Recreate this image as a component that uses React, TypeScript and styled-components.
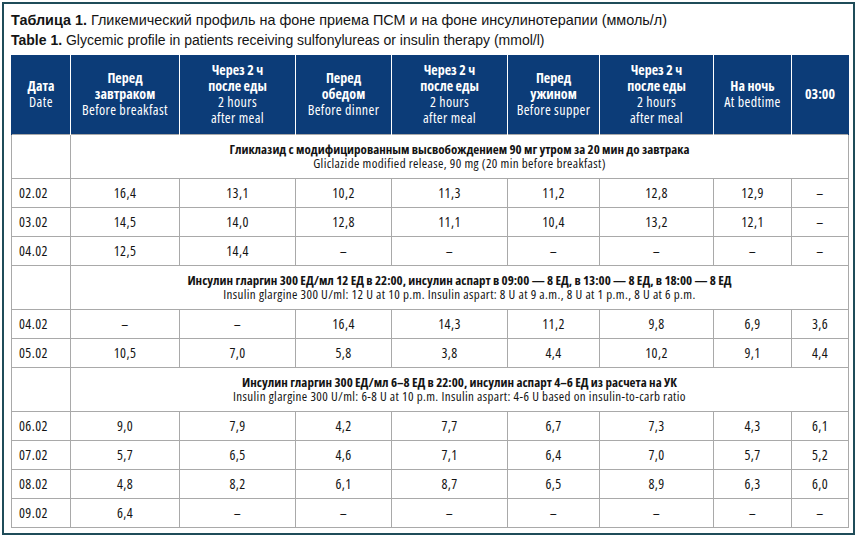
import React from "react";
import styled, { createGlobalStyle } from "styled-components";

const GlobalStyle = createGlobalStyle`
  html, body { margin: 0; padding: 0; background: #ffffff; }
  body { font-family: "Liberation Sans", Arial, sans-serif; color: #111; }
`;

const COND = `"Open Sans", "Noto Sans", sans-serif`;

const Frame = styled.div`
  box-sizing: border-box;
  margin: 2px 0 0 2px;
  width: 853px;
  height: 533px;
  border: 2px solid #1f4c59;
  padding: 6px 0 0 7px;
  background: #fff;
`;

const Title = styled.div<{ $ru?: boolean }>`
  font-family: "Liberation Sans", Arial, sans-serif;
  font-size: ${(p) => (p.$ru ? 14.4 : 14)}px;
  line-height: 20px;
  color: #141414;
  white-space: nowrap;
`;

const Strong = styled.b`
  font-weight: 700;
`;

const Table = styled.table`
  margin-top: 5px;
  border-collapse: collapse;
  table-layout: fixed;
  width: 837px;
  font-family: ${COND};
  font-stretch: condensed;
  color: #141414;
`;

const HeadCell = styled.th`
  background: #0c3c78;
  color: #fff;
  height: 79px;
  padding: 0 2px;
  box-sizing: border-box;
  border-left: 1px solid #fff;
  border-right: 1px solid #fff;
  font-size: 14px;
  line-height: 16px;
  text-align: center;
  vertical-align: middle;
  font-weight: 400;
  &:first-child { border-left: 1px solid #0c3c78; }
  &:last-child { border-right: 1px solid #0c3c78; }
`;

const HeadLine = styled.div<{ $bold?: boolean }>`
  font-weight: ${(p) => (p.$bold ? 700 : 400)};
  letter-spacing: ${(p) => (p.$bold ? "0" : "0.4px")};
  white-space: nowrap;
`;

const Cell = styled.td<{ $date?: boolean; $section?: boolean }>`
  border: 1px solid #a9a9a9;
  height: ${(p) => (p.$section ? 44 : 29)}px;
  box-sizing: border-box;
  padding: ${(p) => (p.$date ? "0 0 0 7px" : "0")};
  text-align: ${(p) => (p.$date ? "left" : "center")};
  vertical-align: middle;
  font-size: 14px;
  line-height: 16px;
  letter-spacing: 0.4px;
  white-space: nowrap;
`;

const SectionLine = styled.div<{ $bold?: boolean }>`
  font-size: 13px;
  line-height: 14px;
  font-weight: ${(p) => (p.$bold ? 700 : 400)};
  letter-spacing: ${(p) => (p.$bold ? "0" : "0.38px")};
`;

type HL = { t: string; b?: boolean };
const AFTER: HL[] = [
  { t: "Через 2 ч", b: true },
  { t: "после еды", b: true },
  { t: "2 hours" },
  { t: "after meal" },
];
const headers: HL[][] = [
  [{ t: "Дата", b: true }, { t: "Date" }],
  [{ t: "Перед", b: true }, { t: "завтраком", b: true }, { t: "Before breakfast" }],
  AFTER,
  [{ t: "Перед", b: true }, { t: "обедом", b: true }, { t: "Before dinner" }],
  AFTER,
  [{ t: "Перед", b: true }, { t: "ужином", b: true }, { t: "Before supper" }],
  AFTER,
  [{ t: "На ночь", b: true }, { t: "At bedtime" }],
  [{ t: "03:00", b: true }],
];

const widths = [59, 109, 116, 96, 116, 92, 114, 78, 57];

type Block = { ru: string; en: string; rows: string[][] };
const D = "–";
const blocks: Block[] = [
  {
    ru: "Гликлазид с модифицированным высвобождением 90 мг утром за 20 мин до завтрака",
    en: "Gliclazide modified release, 90 mg (20 min before breakfast)",
    rows: [
      ["02.02", "16,4", "13,1", "10,2", "11,3", "11,2", "12,8", "12,9", D],
      ["03.02", "14,5", "14,0", "12,8", "11,1", "10,4", "13,2", "12,1", D],
      ["04.02", "12,5", "14,4", D, D, D, D, D, D],
    ],
  },
  {
    ru: "Инсулин гларгин 300 ЕД/мл 12 ЕД в 22:00, инсулин аспарт в 09:00 — 8 ЕД, в 13:00 — 8 ЕД, в 18:00 — 8 ЕД",
    en: "Insulin glargine 300 U/ml: 12 U at 10 p.m. Insulin aspart: 8 U at 9 a.m., 8 U at 1 p.m., 8 U at 6 p.m.",
    rows: [
      ["04.02", D, D, "16,4", "14,3", "11,2", "9,8", "6,9", "3,6"],
      ["05.02", "10,5", "7,0", "5,8", "3,8", "4,4", "10,2", "9,1", "4,4"],
    ],
  },
  {
    ru: "Инсулин гларгин 300 ЕД/мл 6–8 ЕД в 22:00, инсулин аспарт 4–6 ЕД из расчета на УК",
    en: "Insulin glargine 300 U/ml: 6-8 U at 10 p.m. Insulin aspart: 4-6 U based on insulin-to-carb ratio",
    rows: [
      ["06.02", "9,0", "7,9", "4,2", "7,7", "6,7", "7,3", "4,3", "6,1"],
      ["07.02", "5,7", "6,5", "4,6", "7,1", "6,4", "7,0", "5,7", "5,2"],
      ["08.02", "4,8", "8,2", "6,1", "8,7", "6,5", "8,9", "6,3", "6,0"],
      ["09.02", "6,4", D, D, D, D, D, D, D],
    ],
  },
];

export default function App() {
  return (
    <>
      <GlobalStyle />
      <Frame>
        <Title $ru>
          <Strong>Таблица 1.</Strong> Гликемический профиль на фоне приема ПСМ и на фоне инсулинотерапии (ммоль/л)
        </Title>
        <Title>
          <Strong>Table 1.</Strong> Glycemic profile in patients receiving sulfonylureas or insulin therapy (mmol/l)
        </Title>
        <Table>
          <colgroup>
            {widths.map((w, i) => (
              <col key={i} style={{ width: w }} />
            ))}
          </colgroup>
          <thead>
            <tr>
              {headers.map((h, i) => (
                <HeadCell key={i}>
                  {h.map((l, j) => (
                    <HeadLine key={j} $bold={l.b}>
                      {l.t}
                    </HeadLine>
                  ))}
                </HeadCell>
              ))}
            </tr>
          </thead>
          <tbody>
            {blocks.map((b, bi) => (
              <React.Fragment key={bi}>
                <tr>
                  <Cell $section />
                  <Cell $section colSpan={8}>
                    <SectionLine $bold>{b.ru}</SectionLine>
                    <SectionLine>{b.en}</SectionLine>
                  </Cell>
                </tr>
                {b.rows.map((r, ri) => (
                  <tr key={ri}>
                    {r.map((v, ci) => (
                      <Cell key={ci} $date={ci === 0}>
                        {v}
                      </Cell>
                    ))}
                  </tr>
                ))}
              </React.Fragment>
            ))}
          </tbody>
        </Table>
      </Frame>
    </>
  );
}
